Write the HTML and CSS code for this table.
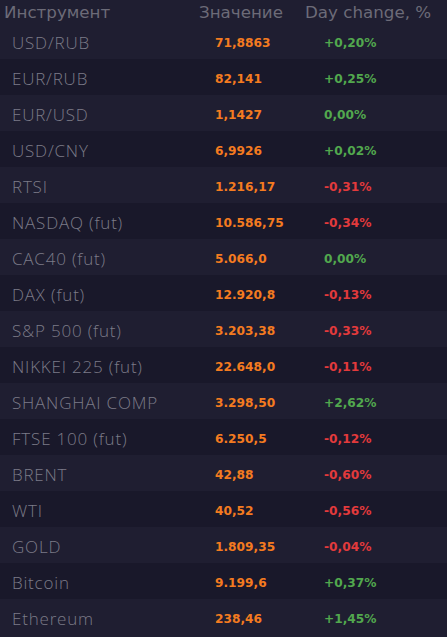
FILE: index.html
```html
<!DOCTYPE html>
<html lang="ru">
<head>
<meta charset="utf-8">
<link rel="stylesheet" href="styles.css">
</head>
<body>
<div class="board">
  <div class="row head">
    <div class="c-name">Инструмент</div>
    <div class="c-val">Значение</div>
    <div class="c-chg">Day change, %</div>
  </div>
  <div class="row light"><div class="c-name">USD/RUB</div><div class="c-val">71,8863</div><div class="c-chg up">+0,20%</div></div>
  <div class="row dark"><div class="c-name">EUR/RUB</div><div class="c-val">82,141</div><div class="c-chg up">+0,25%</div></div>
  <div class="row light"><div class="c-name">EUR/USD</div><div class="c-val">1,1427</div><div class="c-chg up">0,00%</div></div>
  <div class="row dark"><div class="c-name">USD/CNY</div><div class="c-val">6,9926</div><div class="c-chg up">+0,02%</div></div>
  <div class="row light"><div class="c-name">RTSI</div><div class="c-val">1.216,17</div><div class="c-chg down">-0,31%</div></div>
  <div class="row dark"><div class="c-name">NASDAQ (fut)</div><div class="c-val">10.586,75</div><div class="c-chg down">-0,34%</div></div>
  <div class="row light"><div class="c-name">CAC40 (fut)</div><div class="c-val">5.066,0</div><div class="c-chg up">0,00%</div></div>
  <div class="row dark"><div class="c-name">DAX (fut)</div><div class="c-val">12.920,8</div><div class="c-chg down">-0,13%</div></div>
  <div class="row light"><div class="c-name">S&amp;P 500 (fut)</div><div class="c-val">3.203,38</div><div class="c-chg down">-0,33%</div></div>
  <div class="row dark"><div class="c-name">NIKKEI 225 (fut)</div><div class="c-val">22.648,0</div><div class="c-chg down">-0,11%</div></div>
  <div class="row light"><div class="c-name">SHANGHAI COMP</div><div class="c-val">3.298,50</div><div class="c-chg up">+2,62%</div></div>
  <div class="row dark"><div class="c-name">FTSE 100 (fut)</div><div class="c-val">6.250,5</div><div class="c-chg down">-0,12%</div></div>
  <div class="row light"><div class="c-name">BRENT</div><div class="c-val">42,88</div><div class="c-chg down">-0,60%</div></div>
  <div class="row dark"><div class="c-name">WTI</div><div class="c-val">40,52</div><div class="c-chg down">-0,56%</div></div>
  <div class="row light"><div class="c-name">GOLD</div><div class="c-val">1.809,35</div><div class="c-chg down">-0,04%</div></div>
  <div class="row dark"><div class="c-name">Bitcoin</div><div class="c-val">9.199,6</div><div class="c-chg up">+0,37%</div></div>
  <div class="row light"><div class="c-name">Ethereum</div><div class="c-val">238,46</div><div class="c-chg up">+1,45%</div></div>
</div>
</body>
</html>
```

FILE: styles.css
```css
html, body {
  margin: 0;
  padding: 0;
  background: #1f1e31;
}
.board {
  width: 447px;
  height: 637px;
  background: #1f1e31;
}
.row {
  display: grid;
  grid-template-columns: 215px 109px 1fr;
  align-items: center;
  height: 36px;
}
.light { background: #1f1e31; }
.dark { background: #19182a; }
.head {
  height: 23px;
  grid-template-columns: 199px 106px 1fr;
  font-family: "DejaVu Sans", sans-serif;
  font-size: 16.7px;
  color: #6c6b78;
  background: #1f1e31;
  white-space: nowrap;
}
.head .c-name { padding-left: 4px; }
.row:not(.head) .c-name {
  padding-left: 12px;
  padding-top: 3px;
  font-family: "Open Sans", sans-serif;
  font-weight: 300;
  font-size: 17px;
  letter-spacing: 0.8px;
  color: #7c7b88;
  white-space: nowrap;
}
.row:not(.head) .c-val,
.row:not(.head) .c-chg {
  padding-top: 3px;
  font-family: "DejaVu Sans", sans-serif;
  font-weight: bold;
  font-size: 12.2px;
}
.row:not(.head) .c-val { color: #f47b20; }
.up { color: #52a84e; }
.down { color: #e23a3c; }
```
